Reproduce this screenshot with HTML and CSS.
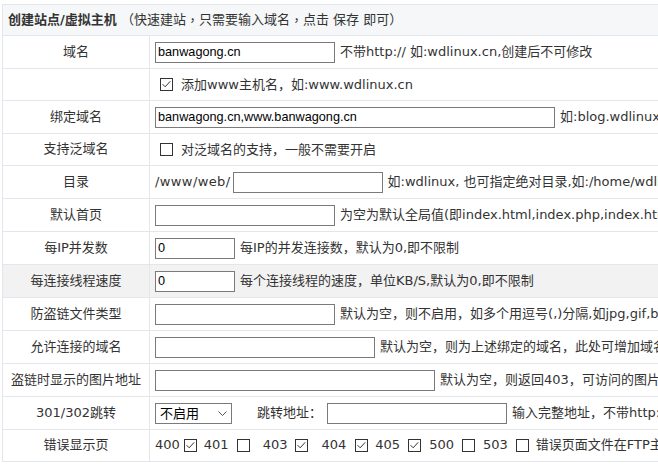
FILE: index.html
```html
<!DOCTYPE html>
<html lang="zh-CN">
<head>
<meta charset="utf-8">
<title>创建站点/虚拟主机</title>
<link rel="stylesheet" href="styles.css">
</head>
<body>
<div class="panel">
  <div class="title"><b class="title-main">创建站点/虚拟主机</b> （快速建站<span class="p">，</span>只需要输入域名<span class="p">，</span>点击 保存 即可）</div>

  <div class="row">
    <div class="label">域名</div>
    <div class="field"><input class="inp w180" type="text" value="banwagong.cn"><span class="desc">不带http:// 如:wdlinux.cn,创建后不可修改</span></div>
  </div>

  <div class="row short">
    <div class="label"></div>
    <div class="field"><svg class="cb cb-lead" width="13" height="13" viewBox="0 0 13 13"><rect x="0.5" y="0.5" width="12" height="12" fill="#fff" stroke="#333"/><path d="M2.6 6.2 L5.2 8.8 L10.2 3.3" fill="none" stroke="#333"/></svg><span>添加www主机名<span class="p">，</span>如:www.wdlinux.cn</span></div>
  </div>

  <div class="row">
    <div class="label">绑定域名</div>
    <div class="field"><input class="inp w400" type="text" value="banwagong.cn,www.banwagong.cn"><span class="desc">如:blog.wdlinux.cn,多个域名用逗号隔开</span></div>
  </div>

  <div class="row short">
    <div class="label">支持泛域名</div>
    <div class="field"><svg class="cb cb-lead" width="13" height="13" viewBox="0 0 13 13"><rect x="0.5" y="0.5" width="12" height="12" fill="#fff" stroke="#333"/></svg><span>对泛域名的支持<span class="p">，</span>一般不需要开启</span></div>
  </div>

  <div class="row">
    <div class="label">目录</div>
    <div class="field"><span class="path">/www/web/</span><input class="inp w150" type="text" value=""><span class="desc">如:wdlinux, 也可指定绝对目录,如:/home/wdlinux</span></div>
  </div>

  <div class="row">
    <div class="label">默认首页</div>
    <div class="field"><input class="inp w180" type="text" value=""><span class="desc">为空为默认全局值(即index.html,index.php,index.htm)</span></div>
  </div>

  <div class="row">
    <div class="label">每IP并发数</div>
    <div class="field"><input class="inp w80" type="text" value="0"><span class="desc">每IP的并发连接数<span class="p">，</span>默认为0,即不限制</span></div>
  </div>

  <div class="row hover">
    <div class="label">每连接线程速度</div>
    <div class="field"><input class="inp w80" type="text" value="0"><span class="desc">每个连接线程的速度<span class="p">，</span>单位KB/S,默认为0,即不限制</span></div>
  </div>

  <div class="row">
    <div class="label">防盗链文件类型</div>
    <div class="field"><input class="inp w180" type="text" value=""><span class="desc">默认为空<span class="p">，</span>则不启用<span class="p">，</span>如多个用逗号(,)分隔,如jpg,gif,bmp</span></div>
  </div>

  <div class="row">
    <div class="label">允许连接的域名</div>
    <div class="field"><input class="inp w220" type="text" value=""><span class="desc">默认为空<span class="p">，</span>则为上述绑定的域名<span class="p">，</span>此处可增加域名</span></div>
  </div>

  <div class="row">
    <div class="label">盗链时显示的图片地址</div>
    <div class="field"><input class="inp w280" type="text" value=""><span class="desc">默认为空<span class="p">，</span>则返回403<span class="p">，</span>可访问的图片地址</span></div>
  </div>

  <div class="row">
    <div class="label">301/302跳转</div>
    <div class="field">
      <div class="sel"><span>不启用</span><svg class="chev" width="9" height="5" viewBox="0 0 9 5"><path d="M0.5 0.5 L4.5 4.5 L8.5 0.5" fill="none" stroke="#555"/></svg></div>
      <span class="jump-label">跳转地址<span class="p">：</span></span><input class="inp w180" type="text" value=""><span class="desc">输入完整地址<span class="p">，</span>不带http://</span>
    </div>
  </div>

  <div class="row short">
    <div class="label">错误显示页</div>
    <div class="field errs">
      <span>400</span><svg class="cb e1" width="13" height="13" viewBox="0 0 13 13"><rect x="0.5" y="0.5" width="12" height="12" fill="#fff" stroke="#333"/><path d="M2.6 6.2 L5.2 8.8 L10.2 3.3" fill="none" stroke="#333"/></svg>
      <span>401</span><svg class="cb e2" width="13" height="13" viewBox="0 0 13 13"><rect x="0.5" y="0.5" width="12" height="12" fill="#fff" stroke="#333"/></svg>
      <span>403</span><svg class="cb e3" width="13" height="13" viewBox="0 0 13 13"><rect x="0.5" y="0.5" width="12" height="12" fill="#fff" stroke="#333"/><path d="M2.6 6.2 L5.2 8.8 L10.2 3.3" fill="none" stroke="#333"/></svg>
      <span>404</span><svg class="cb e4" width="13" height="13" viewBox="0 0 13 13"><rect x="0.5" y="0.5" width="12" height="12" fill="#fff" stroke="#333"/><path d="M2.6 6.2 L5.2 8.8 L10.2 3.3" fill="none" stroke="#333"/></svg>
      <span>405</span><svg class="cb e5" width="13" height="13" viewBox="0 0 13 13"><rect x="0.5" y="0.5" width="12" height="12" fill="#fff" stroke="#333"/><path d="M2.6 6.2 L5.2 8.8 L10.2 3.3" fill="none" stroke="#333"/></svg>
      <span>500</span><svg class="cb e6" width="13" height="13" viewBox="0 0 13 13"><rect x="0.5" y="0.5" width="12" height="12" fill="#fff" stroke="#333"/></svg>
      <span>503</span><svg class="cb e7" width="13" height="13" viewBox="0 0 13 13"><rect x="0.5" y="0.5" width="12" height="12" fill="#fff" stroke="#333"/></svg>
      <span>错误页面文件在FTP主目录下的errors目录</span>
    </div>
  </div>
</div>
</body>
</html>
```

FILE: styles.css
```css
html, body {
  margin: 0;
  padding: 0;
  background: #fff;
  overflow: hidden;
}

body {
  font-family: "DejaVu Sans", "Noto Sans CJK SC", sans-serif;
  font-size: 13px;
  color: #333;
  line-height: 1.3;
}

.p {
  font-family: "Noto Sans CJK TC", "Noto Sans CJK SC", sans-serif;
}

.panel {
  margin: 4px 0 0 2px;
  width: 1000px;
  border-top: 1px solid #e3e6ea;
  border-left: 1px solid #e3e6ea;
}

.title {
  height: 31px;
  box-sizing: border-box;
  border-bottom: 1px solid #e3e6ea;
  background: #f6f7f8;
  display: flex;
  align-items: center;
  padding-left: 5px;
  white-space: pre;
}

.title-main {
  font-weight: bold;
}

.row {
  display: flex;
  height: 33px;
  box-sizing: border-box;
  border-bottom: 1px solid #e3e6ea;
}

.row.short {
  height: 32px;
}

.row.hover {
  background: #f2f2f2;
}

.label {
  width: 147px;
  flex: none;
  box-sizing: border-box;
  border-right: 1px solid #e3e6ea;
  display: flex;
  align-items: center;
  justify-content: center;
  white-space: nowrap;
}

.field {
  flex: 1;
  display: flex;
  align-items: center;
  padding-left: 5px;
  white-space: nowrap;
}

.inp {
  height: 21px;
  box-sizing: border-box;
  border: 1px solid #7a7a7a;
  border-radius: 0;
  padding: 0 2px;
  margin: 0;
  font-family: "Liberation Sans", Arial, sans-serif;
  font-size: 12.7px;
  color: #000;
  background: #fff;
  outline: none;
}

.w80 { width: 80px; }
.w150 { width: 150px; }
.w180 { width: 180px; }
.w220 { width: 220px; }
.w280 { width: 280px; }
.w400 { width: 400px; }

.path {
  letter-spacing: 0.4px;
  margin-right: 2px;
}

.desc {
  margin-left: 5px;
}

.cb {
  flex: none;
  display: block;
}

.cb-lead {
  margin-left: 5px;
  margin-right: 8px;
}

.sel {
  width: 77px;
  height: 21px;
  box-sizing: border-box;
  border: 1px solid #7a7a7a;
  background: #fff;
  display: flex;
  align-items: center;
  justify-content: space-between;
  padding: 0 4px 0 4px;
  font-family: "Noto Sans CJK SC", sans-serif;
  color: #000;
}

.chev {
  display: block;
}

.jump-label {
  margin-left: 25px;
  margin-right: 5px;
}

.errs .e1 { margin: 0 7px 0 4px; }
.errs .e2 { margin: 0 13px 0 8px; }
.errs .e3 { margin: 0 13px 0 8px; }
.errs .e4 { margin: 0 7px 0 9px; }
.errs .e5 { margin: 0 8px 0 8px; }
.errs .e6 { margin: 0 8px 0 8px; }
.errs .e7 { margin: 0 7px 0 8px; }
```
